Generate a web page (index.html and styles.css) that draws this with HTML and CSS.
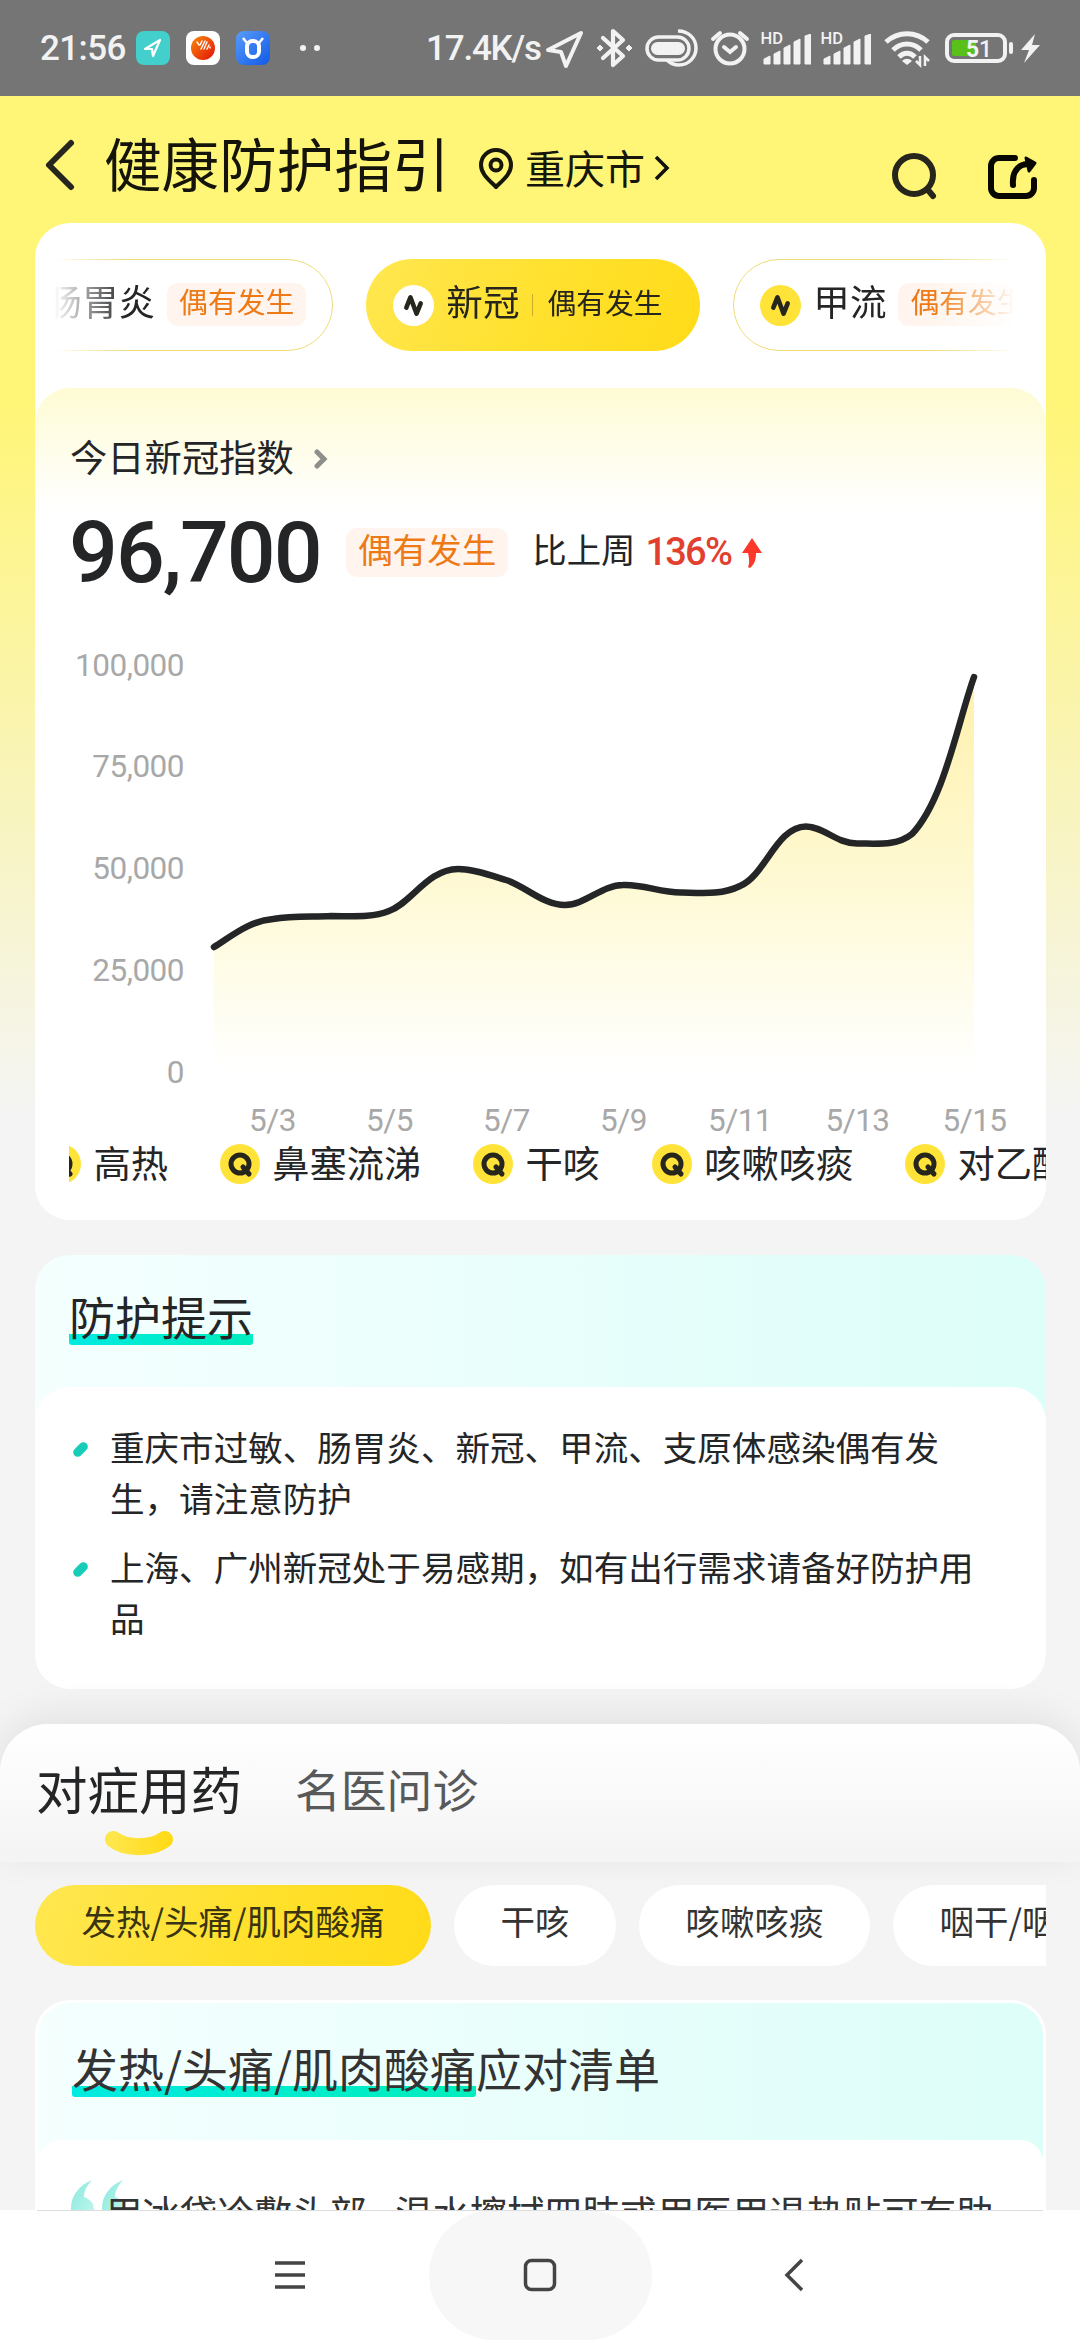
FILE: index.html
```html
<!DOCTYPE html>
<html lang="zh-CN">
<head>
    <meta charset="UTF-8">
    <title>健康防护指引</title>
    <link rel="stylesheet" href="styles.css">
</head>
<body>
<svg width="0" height="0" class="defs">
    <defs>
        <linearGradient id="smileFill" x1="0" x2="1" y1="0" y2="0">
            <stop offset="0" stop-color="#ffe64a"/>
            <stop offset="1" stop-color="#ffdb1a"/>
        </linearGradient>
        <linearGradient id="areaFill" x1="0" x2="0" y1="0" y2="1">
            <stop offset="0" stop-color="#fff0ab"/>
            <stop offset="0.5" stop-color="#fef9d2"/>
            <stop offset="1" stop-color="#ffffff"/>
        </linearGradient>
        <symbol id="q" viewBox="0 0 40 40">
            <circle cx="20" cy="20" r="20" fill="#ffe339"/>
            <circle cx="20" cy="20" r="9" fill="none" stroke="#26261c" stroke-width="5"/>
            <path d="M23 23l6 7" stroke="#26261c" stroke-width="5" stroke-linecap="round"/>
        </symbol>
        <symbol id="wave" viewBox="0 0 40 40">
            <path d="M13 22l4-10 6 16 4-10" fill="none" stroke="#26261c" stroke-width="4.500" stroke-linecap="round" stroke-linejoin="round"/>
        </symbol>
        <symbol id="signal" viewBox="0 0 48 31">
            <path d="M1 25l6-3v8H1zM11 20l6-3v13h-6zM21 14l6-3v19h-6zM31 8l6-3v25h-6zM42 2l6-2v30h-6z" fill="#f2f2f2"/>
        </symbol>
    </defs>
</svg>
<div class="page">
    <div class="status">
        <span class="time">21:56</span>
        <div class="apps">
            <svg width="34" height="34" viewBox="0 0 34 34"><rect width="34" height="34" rx="8" fill="#43cfcb"/><path d="M9 18l15-9-7 16-1-7z" fill="none" stroke="#fff" stroke-width="2.2" stroke-linejoin="round"/></svg>
            <svg width="34" height="34" viewBox="0 0 34 34"><defs><linearGradient id="red" x1="0" y1="0" x2="1" y2="1"><stop offset="0" stop-color="#f98a08"/><stop offset="1" stop-color="#e3100a"/></linearGradient></defs><rect width="34" height="34" rx="8" fill="#fff"/><circle cx="17" cy="17" r="12" fill="url(#red)"/><path d="M11 11l2 3M16 10l-2 4M19 10l-4 8M21 11l-3 7M23 14l-2 4M24 16v1" stroke="#fff" stroke-width="1.400" stroke-linecap="round"/></svg>
            <svg width="34" height="34" viewBox="0 0 34 34"><defs><linearGradient id="blue" x1="0" y1="0" x2="1" y2="1"><stop offset="0" stop-color="#5a9cf8"/><stop offset="1" stop-color="#1059e8"/></linearGradient></defs><rect width="34" height="34" rx="8" fill="url(#blue)"/><rect x="11" y="10" width="12" height="16" rx="5.5" fill="none" stroke="#fff" stroke-width="4"/><path d="M7 7l4 5M27 7l-4 5" stroke="#fff" stroke-width="2.5"/></svg>
        </div>
        <span class="dots"><i></i><i></i></span>
        <span class="speed">17.4K/s</span>
        <svg class="sys" width="504" height="42" viewBox="540 27 504 42" fill="none" stroke="#f2f2f2">
            <path d="M548 50l33-17-15 33-5-14z" stroke-width="4" stroke-linejoin="round"/>
            <path d="M603 38l20 18-10 9V31l10 9-20 18" stroke-width="4.2" stroke-linejoin="round" stroke-linecap="round"/>
            <path d="M597 48l3-3 3 3-3 3zM626 48l3-3 3 3-3 3z" fill="#f2f2f2" stroke-width="1"/>
            <rect x="647" y="37" width="42" height="23" rx="11.5" stroke-width="3.5"/>
            <rect x="651" y="42" width="34" height="13" rx="6.5" fill="#f2f2f2" stroke="none"/>
            <path d="M678 31c11 0 18 8 18 17s-7 17-17 17c-5 0-9-2-12-5" stroke-width="3.5"/>
            <circle cx="730" cy="49" r="14.5" stroke-width="4"/>
            <path d="M724 47l6 5 6-5M713 39l7-6M747 39l-7-6" stroke-width="4" stroke-linecap="round"/>
            <use href="#signal" x="763" y="34" width="48" height="31"/>
            <use href="#signal" x="823" y="34" width="48" height="31"/>
            <path d="M886 42c12-11 30-11 42 0M893 50c8-8 20-8 28 0" stroke-width="5"/>
            <path d="M899 57c5-5 11-5 16 0" stroke-width="5"/>
            <path d="M902 61c3-3 7-3 10 0l-5 4z" fill="#f2f2f2" stroke="none"/>
            <path d="M920 56v9l-4-4M925 66v-9l4 4" stroke-width="2.5"/>
            <rect x="947" y="35" width="58" height="26" rx="7" stroke-width="4"/>
            <rect x="952" y="40" width="24" height="16" rx="2" fill="#59c01a" stroke="none"/>
            <path d="M1011 44v8" stroke-width="4" stroke-linecap="round"/>
            <path d="M1035 34l-14 16h8l-5 13 16-18h-8z" fill="#f2f2f2" stroke="none"/>
            <g fill="#f2f2f2" stroke="none" font-family="Roboto, sans-serif" font-weight="500">
                <text x="760.5" y="44" font-size="16.5">HD</text>
                <text x="820.5" y="44" font-size="16.5">HD</text>
                <text x="966" y="57" font-size="23" font-weight="700">5</text>
                <text x="979" y="57" font-size="23">1</text>
            </g>
        </svg>
    </div>

    <div class="header">
        <svg class="back" width="32" height="54" viewBox="0 0 32 54"><path d="M27 5L5 27l22 22" fill="none" stroke="#26261e" stroke-width="6" stroke-linecap="round" stroke-linejoin="round"/></svg>
        <h1>健康防护指引</h1>
        <svg class="pin" width="34" height="42" viewBox="0 0 34 42" fill="none" stroke="#16160a" stroke-width="4"><path d="M17 39C10 32 2 26 2 17a15 15 0 0 1 30 0c0 9-8 15-15 22z" stroke-linejoin="round"/><circle cx="17" cy="17" r="5.5"/></svg>
        <span class="city">重庆市</span>
        <svg class="go" width="16" height="26" viewBox="0 0 16 26"><path d="M2 2l11 11L2 24" fill="none" stroke="#111" stroke-width="3.5"/></svg>
        <svg class="search" width="46" height="48" viewBox="0 0 46 48" fill="none" stroke="#26261c" stroke-width="6"><circle cx="22" cy="23" r="19"/><path d="M36 38l5 6" stroke-linecap="round"/></svg>
        <svg class="share" width="50" height="46" viewBox="0 0 50 46" fill="none" stroke="#080800" stroke-width="6" stroke-linecap="round"><path d="M27 4H11a8 8 0 0 0-8 8v22a8 8 0 0 0 8 8h27a8 8 0 0 0 8-8v-8"/><path d="M25 31c-1-12 4-20 14-21"/><path d="M38 4l9 5-6 8z" fill="#080800" stroke-width="3" stroke-linejoin="round"/></svg>
    </div>

    <div class="card main">
        <div class="tabs">
            <div class="tab">
                <svg class="dot" viewBox="0 0 40 40"><circle cx="20" cy="20" r="20" fill="#ffe339"/><use href="#wave"/></svg>
                <span class="name">肠胃炎</span><span class="badge">偶有发生</span>
            </div>
            <div class="tab active">
                <svg class="dot" viewBox="0 0 40 40"><circle cx="20" cy="20" r="20" fill="#fff"/><use href="#wave"/></svg>
                <span class="name">新冠</span><i class="line"></i><span class="state">偶有发生</span>
            </div>
            <div class="tab">
                <svg class="dot" viewBox="0 0 40 40"><circle cx="20" cy="20" r="20" fill="#ffe339"/><use href="#wave"/></svg>
                <span class="name">甲流</span><span class="badge">偶有发生</span>
            </div>
        </div>
        <div class="panel">
            <div class="index-title">今日新冠指数
                <svg width="14" height="22" viewBox="0 0 14 22"><path d="M3 4l7 7-7 7" fill="none" stroke="#8e8e8a" stroke-width="5" stroke-linecap="round"/></svg>
            </div>
            <div class="index">
                <span class="num">96,700</span>
                <span class="badge big">偶有发生</span>
                <span class="week">比上周</span>
                <span class="rate">136%</span>
                <svg width="20" height="30" viewBox="0 0 20 30"><path d="M10 0l10 15h-6c0 6-1 11-6 15l-2-1c2-4 1-9 0-14H0z" fill="#fc382b"/></svg>
            </div>
            <svg class="chart" width="1011" height="520" viewBox="35 620 1011 520">
                <path d="M214 947C233 935 250 921 273 919C292 916 312 917 331 916C352 916 372 918 389 911C412 903 427 869.500 458 869C473 869 490 875 506 880C527 887 543 905 565 905C585 905 602 885 623 885C643 884 661 893 682 892.500C702 893 722 895 740 886C766 875 776 827 806 826.500C824 826.500 836 843.500 857 843.500C878 843.500 897 846 912 834C944 800 957 725 974 677V1072H214z" fill="url(#areaFill)"/>
                <path d="M214 947C233 935 250 921 273 919C292 916 312 917 331 916C352 916 372 918 389 911C412 903 427 869.500 458 869C473 869 490 875 506 880C527 887 543 905 565 905C585 905 602 885 623 885C643 884 661 893 682 892.500C702 893 722 895 740 886C766 875 776 827 806 826.500C824 826.500 836 843.500 857 843.500C878 843.500 897 846 912 834C944 800 957 725 974 677" fill="none" stroke="#242526" stroke-width="6.500" stroke-linecap="round"/>
                <g class="axis" text-anchor="end">
                    <text x="184" y="676">100,000</text>
                    <text x="184" y="776.500">75,000</text>
                    <text x="184" y="878.500">50,000</text>
                    <text x="184" y="980.500">25,000</text>
                    <text x="184" y="1082.500">0</text>
                </g>
                <g class="axis" text-anchor="middle">
                    <text x="272.500" y="1131">5/3</text>
                    <text x="389.500" y="1131">5/5</text>
                    <text x="506.500" y="1131">5/7</text>
                    <text x="623.500" y="1131">5/9</text>
                    <text x="740" y="1131">5/11</text>
                    <text x="857.500" y="1131">5/13</text>
                    <text x="974.500" y="1131">5/15</text>
                </g>
            </svg>
            <div class="words">
                <div class="word"><svg><use href="#q"/></svg><span>高热</span></div>
                <div class="word"><svg><use href="#q"/></svg><span>鼻塞流涕</span></div>
                <div class="word"><svg><use href="#q"/></svg><span>干咳</span></div>
                <div class="word"><svg><use href="#q"/></svg><span>咳嗽咳痰</span></div>
                <div class="word"><svg><use href="#q"/></svg><span>对乙酰</span></div>
            </div>
        </div>
    </div>

    <div class="card tips">
        <h2><span class="mark">防护提示</span></h2>
        <ul>
            <li>重庆市过敏、肠胃炎、新冠、甲流、支原体感染偶有发生，请注意防护</li>
            <li>上海、广州新冠处于易感期，如有出行需求请备好防护用品</li>
        </ul>
    </div>

    <div class="sheet">
        <div class="menu">
            <div class="on">对症用药
                <svg width="70" height="26" viewBox="0 0 70 26"><path d="M9.500 9.500C22 19 48 19 60.500 9.500" fill="none" stroke="url(#smileFill)" stroke-width="17" stroke-linecap="round"/></svg>
            </div>
            <div class="off">名医问诊</div>
        </div>
    </div>
    <div class="chips">
        <span class="chip active">发热/头痛/肌肉酸痛</span>
        <span class="chip">干咳</span>
        <span class="chip">咳嗽咳痰</span>
        <span class="chip">咽干/咽</span>
    </div>
    <div class="list">
        <h2><span class="mark">发热/头痛/肌肉酸痛</span>应对清单</h2>
        <div class="advice">
            <svg class="quote" width="54" height="58" viewBox="0 0 54 58"><defs><linearGradient id="quoteFill" x1="0" y1="0" x2="1" y2="1"><stop offset="0" stop-color="#8ae8dc"/><stop offset="1" stop-color="#c4f8f0"/></linearGradient></defs><path id="mk" d="M21 0C8 5 0 16 0 28c0 9 5 15 12 15s11-5 11-13c0-7-4-11-10-13 0-6 3-11 8-17z" fill="url(#quoteFill)"/><use href="#mk" x="31"/></svg>
            <p>用冰袋冷敷头部<span class="comma">，</span>温水擦拭四肢或用医用退热贴可有助</p>
        </div>
    </div>
    <div class="nav">
        <div class="nav-item menu-key"><svg width="32" height="32" viewBox="0 0 32 32"><path d="M1 4h30M1 16h30M1 28h30" stroke="#444" stroke-width="3.500"/></svg></div>
        <div class="nav-item home"><svg width="34" height="34" viewBox="0 0 34 34"><rect x="2.500" y="2.500" width="29" height="29" rx="6" fill="none" stroke="#444" stroke-width="3.500"/></svg></div>
        <div class="nav-item"><svg width="20" height="34" viewBox="0 0 20 34"><path d="M18 2L3 17l15 15" fill="none" stroke="#444" stroke-width="3.500"/></svg></div>
    </div>
</div>
</body>
</html>
```
FILE: styles.css
```css
*{
    padding: 0;
    margin: 0;
    box-sizing: border-box;
}
ul{
    list-style: none;
}
svg{
    display: block;
    flex: none;
}
.defs{
    position: absolute;
}
body{
    width: 1080px;
    height: 2340px;
    overflow: hidden;
    font-family: "Noto Sans CJK SC", sans-serif;
    color: #242526;
}
.page{
    display: flex;
    flex-direction: column;
    height: 2340px;
    background: linear-gradient(#fff577 400px, #f4f4f4 1115px);
    white-space: nowrap;
    overflow: hidden;
}
.page > div{
    flex: none;
}
h1,h2{
    font-weight: 400;
}

/* 状态栏 */
.status{
    display: flex;
    align-items: center;
    height: 96px;
    padding-left: 40px;
    background: #757575;
    color: #f2f2f2;
    font: 500 35px Roboto, sans-serif;
    letter-spacing: -0.6px;
}
.time{
    width: 96px;
}
.apps{
    display: flex;
    gap: 16px;
}
.dots{
    display: flex;
    gap: 8px;
    margin-left: 30px;
    width: 126px;
}
.dots i{
    width: 6px;
    height: 6px;
    border-radius: 50%;
    background: #f2f2f2;
}
.speed{
    width: 114px;
    letter-spacing: -1.2px;
}
.sys{
    letter-spacing: 0;
}

/* 标题栏 */
.header{
    display: flex;
    align-items: center;
    height: 127px;
    padding: 9px 42px 0 44px;
}
.back{
    margin-right: 28px;
    margin-top: 2px;
}
h1{
    width: 347px;
    margin-top: -4px;
    font-size: 57.6px;
    line-height: 80px;
    color: #14140a;
}
.pin{
    margin: 9px 12px 0 28px;
}
.city{
    font-size: 40px;
    line-height: 56px;
    margin-top: 6px;
    color: #16160a;
}
.go{
    margin: 7px 0 0 9px;
}
.search{
    margin: 24px 50px 0 auto;
}
.share{
    margin-top: 25px;
}

/* 指数卡片 */
.card{
    margin: 0 34px 0 35px;
    border-radius: 35px;
    overflow: hidden;
    background: #fff;
}
.main{
    height: 997px;
}
.tabs{
    display: flex;
    justify-content: center;
    gap: 33px;
    height: 165px;
    padding: 36px 36px 0 0;
    margin: 0 34px 0 19px;
    -webkit-mask-image: linear-gradient(90deg, transparent, #000 72px, #000 880px, transparent 962px);
    mask-image: linear-gradient(90deg, transparent, #000 72px, #000 880px, transparent 962px);
}
.tab{
    display: flex;
    flex: none;
    align-items: center;
    height: 92px;
    padding: 0 26px;
    border: 1px solid #f0dc78;
    border-radius: 46px;
}
.dot{
    width: 41px;
    height: 41px;
}
.name{
    margin: -9px 0 0 12px;
    font-size: 36.6px;
}
.badge{
    height: 43px;
    margin-left: 12px;
    margin-top: -1px;
    padding: 0 12px;
    border-radius: 11px;
    background: #fff5ee;
    color: #ed7a16;
    font-size: 28.8px;
    line-height: 35px;
}
.tab.active{
    width: 334px;
    border: 0;
    padding-left: 27px;
    background: linear-gradient(115deg, #ffe750, #ffe12f 50%, #ffdb18);
    color: #26261c;
}
.line{
    width: 1px;
    height: 22px;
    margin: 0 14px 0 13px;
    background: #c9ac28;
}
.state{
    font-size: 28.8px;
    margin-top: -8px;
}
.panel{
    height: 832px;
    border-radius: 35px 35px 0 0;
    background: linear-gradient(#fefbd4, #fff 122px);
}
.index-title{
    display: flex;
    align-items: center;
    gap: 20px;
    padding: 41px 0 2px 35px;
    font-size: 37.3px;
    line-height: 54px;
}
.index-title svg{
    margin-top: 5px;
}
.index{
    display: flex;
    align-items: center;
    height: 135px;
    padding-left: 34px;
}
.num{
    width: 277px;
    font: 500 86px/100px Roboto, sans-serif;
    letter-spacing: -2px;
    margin-top: 0;
}
.badge.big{
    height: 49px;
    margin: 0 24px 0 0;
    font-size: 34.6px;
    line-height: 40px;
}
.week{
    font-size: 34.4px;
    margin-top: -9px;
}
.rate{
    width: 96px;
    margin: -2px 0 0 10px;
    color: #e2402f;
    font: 500 38px Roboto, sans-serif;
    letter-spacing: -1.8px;
}
.axis{
    font: 31.5px Roboto, sans-serif;
    letter-spacing: -0.5px;
    fill: #a8a8a8;
}
.words{
    display: flex;
    justify-content: flex-start;
    gap: 51.6px;
    height: 60px;
    margin: -6px 0 0 34px;
    padding-top: 10px;
    overflow: hidden;
}
.word{
    display: flex;
    flex: none;
    align-items: center;
    height: 40px;
    font-size: 37.3px;
}
.word span{
    margin-top: -5px;
}
.word:first-child{
    margin-left: -28px;
}
.word svg{
    width: 40px;
    height: 40px;
    margin-right: 12.5px;
}

/* 防护提示 */
.tips{
    height: 434px;
    margin-top: 35px;
    background: linear-gradient(90deg, #f4fffe, #ddfef9);
}
h2{
    font-size: 46px;
    line-height: 66px;
}
.tips h2{
    height: 132px;
    padding: 27px 34px 0;
}
.mark{
    display: inline-block;
    height: 63px;
    background: linear-gradient(90deg, #00ebe0, #00edbd) left bottom / 100% 11px no-repeat;
    border-radius: 3px;
    vertical-align: top;
}
.tips ul{
    height: 302px;
    padding: 34px 66px 0 75px;
    border-radius: 35px;
    background: #fff;
}
.tips li{
    position: relative;
    margin-bottom: 17px;
    font-size: 34.56px;
    line-height: 51.3px;
    white-space: normal;
}
.tips li:before{
    content: "";
    position: absolute;
    left: -38px;
    top: 24px;
    width: 17px;
    height: 9px;
    border-radius: 5px;
    background: #17cdb7;
    transform: rotate(-45deg);
}

/* 用药 */
.sheet{
    height: 138px;
    margin-top: 35px;
    border-radius: 48px 48px 0 0;
    background: linear-gradient(#fff, #f4f4f4);
    box-shadow: 0 -8px 40px rgba(0,0,0,.08);
}
.menu{
    display: flex;
    align-items: center;
    height: 138px;
    padding: 0 0 12px 36px;
}
.on{
    position: relative;
    font-size: 51.5px;
    margin-right: 53px;
}
.on svg{
    position: absolute;
    left: 68px;
    top: 80px;
}
.off{
    margin-top: 2px;
    font-size: 45.8px;
    color: #58595b;
}
.chips{
    display: flex;
    gap: 23px;
    margin: 23px 34px 0 35px;
    overflow: hidden;
}
.chip{
    flex: none;
    height: 81px;
    padding: 0 46.5px;
    border-radius: 41px;
    background: #fff;
    color: #333;
    font-size: 34.5px;
    line-height: 71px;
}
.chip.active{
    background: linear-gradient(105deg, #ffe750, #ffe12f 50%, #ffdb18);
    color: #3a3510;
}
.list{
    height: 210px;
    margin: 34px 34px 0 35px;
    border: 3px solid #fff;
    border-bottom: 0;
    border-radius: 35px 35px 0 0;
    background: linear-gradient(90deg, #f4fffe, #ddfef9);
    color: #333;
    overflow: hidden;
}
.list h2{
    height: 137px;
    padding: 31px 34px 0;
}
.advice{
    position: relative;
    height: 90px;
    padding: 45px 0 0 67px;
    border-radius: 22px 22px 0 0;
    background: #fff;
    font-size: 37.4px;
    line-height: 54px;
}
.quote{
    position: absolute;
    left: 33px;
    top: 40px;
}
.advice p{
    position: relative;
}
.comma{
    letter-spacing: -9px;
}

/* 导航栏 */
.nav{
    position: relative;
    display: flex;
    justify-content: center;
    height: 130px;
    background: #fff;
    overflow: hidden;
}
.nav:before{
    content: "";
    position: absolute;
    left: 37px;
    right: 37px;
    top: 0;
    height: 1px;
    background: #ddd;
}
.nav-item{
    display: flex;
    align-items: center;
    justify-content: center;
    width: 285px;
}
.menu-key{
    padding-left: 7px;
}
.nav-item.home{
    width: 223px;
    border-radius: 65px;
    background: #f7f7f7;
}
```
